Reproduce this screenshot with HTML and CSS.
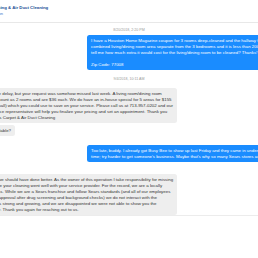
FILE: index.html
```html
<!DOCTYPE html>
<html lang="en">
<head>
<meta charset="utf-8">
<title>Conversation</title>
<link rel="stylesheet" href="styles.css">
</head>
<body>
<div class="page">
  <header class="header">
    <div class="title">Sears Carpet Cleaning &amp; Air Duct Cleaning</div>
    <div class="subtitle">Customer Conversation</div>
  </header>
  <main class="thread">
    <div class="stamp">8/20/2018, 2:20 PM</div>
    <div class="msg out wide">I have a Houston Home Magazine coupon for 3 rooms deep-cleaned and the hallway free. I have a<br>combined living/dining room area separate from the 3 bedrooms and it is less than 200 sq ft. Can you<br>tell me how much extra it would cost for the living/dining room to be cleaned? Thanks!<br><br>Zip Code: 77008</div>

    <div class="stamp later">9/4/2018, 10:11 AM</div>
    <div class="msg in wide">Sorry about the delay, but your request was somehow missed last week. A living room/dining room<br>combo would count as 2 rooms and are $36 each. We do have an in-house special for 5 areas for $155<br>(including the hall) which you could use to save on your service. Please call us at 713-957-0202 and our<br>customer service representative will help you finalize your pricing and set an appointment. Thank you<br>Regards, Sears Carpet &amp; Air Duct Cleaning</div>
    <div class="msg in follow">Is this still available?</div>

    <div class="msg out wide reply">Too late, buddy. I already got Busy Bee to show up last Friday and they came in under budget and on<br>time; try harder to get someone's business. Maybe that's why so many Sears stores are closing.</div>

    <div class="msg in wide answer">You are right, we should have done better. As the owner of this operation I take responsibility for missing<br>your call. I hope your cleaning went well with your service provider. For the record, we are a locally<br>owned business. While we are a Sears franchise and follow Sears standards (and all of our employees<br>are hired with approval after drug screening and background checks) we do not interact with the<br>Our business is strong and growing, and we are disappointed we were not able to show you the<br>quality we offer. Thank you again for reaching out to us.</div>
  </main>
  <div class="composer"></div>
</div>
</body>
</html>
```
FILE: styles.css
```css
html, body {
  margin: 0;
  padding: 0;
  background: #ffffff;
  overflow: hidden;
}

body {
  width: 258px;
  height: 258px;
  font-family: "Liberation Sans", Arial, sans-serif;
}

.page {
  width: 340px;
  margin-left: -41px;
}

.header {
  box-sizing: border-box;
  height: 23px;
  padding: 5px 0 0 2px;
  border-bottom: 1px solid #e8e8e8;
}

.title {
  font-size: 4.3px;
  line-height: 6px;
  font-weight: bold;
  color: #234f94;
  white-space: nowrap;
}

.subtitle {
  font-size: 4px;
  line-height: 6px;
  color: #3a74c8;
  white-space: nowrap;
}

.thread {
  display: flex;
  flex-direction: column;
  padding: 0 8px;
}

.stamp {
  align-self: center;
  font-size: 3.6px;
  line-height: 5px;
  color: #9a9a9a;
  margin: 4.5px 0 2.5px;
  white-space: nowrap;
}

.stamp.later {
  margin: 6.5px 0;
}

.msg {
  box-sizing: border-box;
  font-size: 4.4px;
  line-height: 6px;
  padding: 2.5px 4px;
  border-radius: 2.5px;
  white-space: nowrap;
  overflow: hidden;
}

.out {
  align-self: flex-end;
  background: #1a8cff;
  color: #ffffff;
}

.in {
  align-self: flex-start;
  background: #eeeeee;
  color: #333333;
}

.in.wide {
  width: 210px;
}

.out.wide {
  width: 204px;
}

.follow {
  margin-top: 2px;
}

.reply {
  margin-top: 9px;
}

.answer {
  margin-top: 12px;
}

.composer {
  border-top: 1px solid #ececec;
  height: 40px;
}
```
